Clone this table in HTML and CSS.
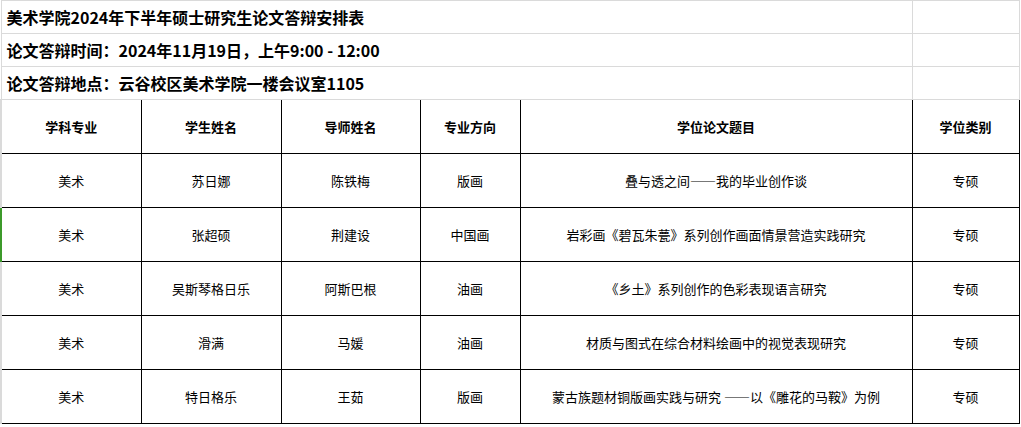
FILE: index.html
```html
<!DOCTYPE html>
<html lang="zh-CN">
<head>
<meta charset="utf-8">
<title>美术学院2024年下半年硕士研究生论文答辩安排表</title>
<link rel="stylesheet" href="styles.css">
</head>
<body>
<table class="sheet">
  <colgroup>
    <col class="c1"><col class="c2"><col class="c3"><col class="c4"><col class="c5"><col class="c6">
  </colgroup>
  <tbody>
    <tr class="info"><td colspan="5" class="info-cell">美术学院2024年下半年硕士研究生论文答辩安排表</td><td class="info-empty"></td></tr>
    <tr class="info"><td colspan="5" class="info-cell">论文答辩时间：2024年11月19日，上午9:00 - 12:00</td><td class="info-empty"></td></tr>
    <tr class="info"><td colspan="5" class="info-cell">论文答辩地点：云谷校区美术学院一楼会议室1105</td><td class="info-empty"></td></tr>
    <tr class="head">
      <th class="first">学科专业</th><th>学生姓名</th><th>导师姓名</th><th>专业方向</th><th>学位论文题目</th><th>学位类别</th>
    </tr>
    <tr class="row">
      <td class="first">美术</td><td>苏日娜</td><td>陈铁梅</td><td>版画</td><td>叠与透之间——我的毕业创作谈</td><td>专硕</td>
    </tr>
    <tr class="row">
      <td class="first selected">美术</td><td>张超硕</td><td>荆建设</td><td>中国画</td><td>岩彩画《碧瓦朱甍》系列创作画面情景营造实践研究</td><td>专硕</td>
    </tr>
    <tr class="row">
      <td class="first">美术</td><td>吴斯琴格日乐</td><td>阿斯巴根</td><td>油画</td><td>《乡土》系列创作的色彩表现语言研究</td><td>专硕</td>
    </tr>
    <tr class="row">
      <td class="first">美术</td><td>滑满</td><td>马媛</td><td>油画</td><td>材质与图式在综合材料绘画中的视觉表现研究</td><td>专硕</td>
    </tr>
    <tr class="row">
      <td class="first">美术</td><td>特日格乐</td><td>王茹</td><td>版画</td><td>蒙古族题材铜版画实践与研究 ——以《雕花的马鞍》为例</td><td>专硕</td>
    </tr>
  </tbody>
</table>
</body>
</html>
```

FILE: styles.css
```css
html, body {
  margin: 0;
  padding: 0;
  background: #ffffff;
}

body {
  font-family: "Microsoft YaHei", "Noto Sans CJK SC", "Noto Sans", sans-serif;
  color: #000000;
}

.sheet {
  border-collapse: collapse;
  table-layout: fixed;
  width: 1018px;
  border-top: 1px solid #dadada;
}

.c1 { width: 140px; }
.c2 { width: 140px; }
.c3 { width: 139px; }
.c4 { width: 100px; }
.c5 { width: 392px; }
.c6 { width: 107px; }

.info td {
  height: 32px;
  padding: 0 0 0 5px;
  font-size: 16px;
  font-weight: bold;
  border-bottom: 1px solid #dadada;
  border-left: 1px solid #dadada;
  border-right: 1px solid #dadada;
  white-space: nowrap;
  vertical-align: middle;
}

.info td.info-empty {
  padding: 0;
}

.head th,
.row td {
  border: 1px solid #000000;
  text-align: center;
  vertical-align: middle;
  padding: 0;
  font-size: 13px;
  white-space: nowrap;
}

.head th {
  height: 53px;
  font-weight: bold;
}

.row td {
  height: 53px;
  font-weight: normal;
}

.head th.first,
.row td.first {
  border-left: 2px solid #dadada;
}

.row td.first.selected {
  border-left: 2px solid #3c9a2a;
}
```
